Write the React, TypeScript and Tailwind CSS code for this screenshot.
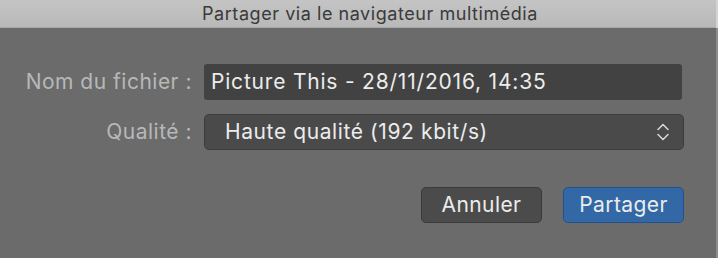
import React from "react";

export default function App() {
  return (
    <div className="w-[718px] h-[258px] flex bg-[#6b6b6b] overflow-hidden" style={{ fontFamily: "Inter, 'Noto Sans', sans-serif" }}>
      <div className="flex-1 flex flex-col">
        <div className="h-[28px] flex items-center justify-center pl-[24px] bg-gradient-to-b from-[#c4c4c4] to-[#b9b9b9] border-b border-[#a8a8a8]">
          <span className="text-[18px] text-[#3a3a3a] tracking-[0.55px]">Partager via le navigateur multimédia</span>
        </div>
        <div className="flex flex-col pt-[36px] pl-[20px] pr-[34px]">
          <div className="flex items-center h-[36px]">
            <div className="w-[184px] text-right text-[21px] tracking-[0.5px] text-[#b8b8b8] pr-[12px]">Nom du fichier :</div>
            <div className="flex-1 h-[36px] bg-[#424242] rounded-[3px] flex items-center pl-[7px] text-[21px] tracking-[0.8px] text-[#ececec]">
              Picture This - 28/11/2016, 14:35
            </div>
          </div>
          <div className="flex items-center h-[36px] mt-[14px]">
            <div className="w-[184px] text-right text-[21px] tracking-[0.5px] text-[#b8b8b8] pr-[12px]">Qualité :</div>
            <div className="flex-1 mr-[-2px] h-[36px] bg-[#4a4a4a] border border-[#3c3c3c] rounded-[5px] flex items-center pl-[20px] pr-[14px] text-[21px] tracking-[0.6px] text-[#ececec]">
              <span className="flex-1">Haute qualité (192 kbit/s)</span>
              <svg width="12" height="20" viewBox="0 0 12 20" fill="none" stroke="#d8d8d8" strokeWidth="1.5" strokeLinecap="round" strokeLinejoin="round">
                <path d="M1 7.5 L6 2.5 L11 7.5" />
                <path d="M1 12.5 L6 17.5 L11 12.5" />
              </svg>
            </div>
          </div>
          <div className="flex justify-end gap-[21px] mt-[37px] mr-[-2px]">
            <button className="w-[121px] h-[36px] rounded-[5px] bg-[#4b4b4b] border border-[#3a3a3a] text-[21px] tracking-[0.4px] text-[#ececec]">Annuler</button>
            <button className="w-[121px] h-[36px] rounded-[5px] bg-[#3368a7] border border-[#24508a] text-[21px] tracking-[0.4px] text-[#ececec]">Partager</button>
          </div>
        </div>
      </div>
      <div className="w-[2px] flex flex-col">
        <div className="h-[28px] bg-[#d4d4d4]" />
        <div className="flex-1 bg-[#8c8c8c]" />
      </div>
    </div>
  );
}
